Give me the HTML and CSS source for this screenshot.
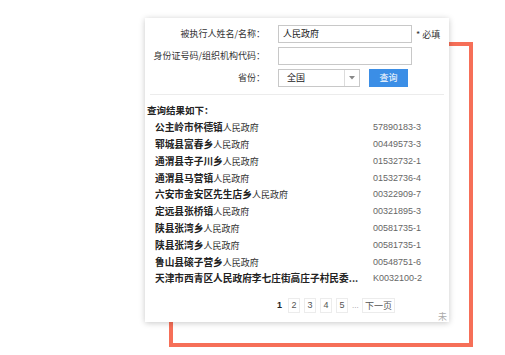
FILE: index.html
```html
<!DOCTYPE html>
<html lang="zh">
<head>
<meta charset="utf-8">
<title>查询</title>
<link rel="stylesheet" href="styles.css">
</head>
<body>
<div class="stage">
  <div class="frame"></div>
  <div class="card">
    <div class="form">
      <div class="label">被执行人姓名/名称：</div>
      <div class="field"><div class="input">人民政府</div><span class="req">* 必填</span></div>
      <div class="label">身份证号码/组织机构代码：</div>
      <div class="field"><div class="input"></div></div>
      <div class="label">省份：</div>
      <div class="field">
        <div class="select"><span class="sel-text">全国</span><span class="sel-arrow"><svg width="6" height="4" viewBox="0 0 6 4"><path d="M0 0H6L3 3.5Z" fill="#888"/></svg></span></div>
        <div class="btn">查询</div>
      </div>
    </div>
    <div class="sep"></div>
    <div class="results">
      <div class="heading">查询结果如下：</div>
      <div class="row"><span class="name"><b>公主岭市怀德镇</b>人民政府</span><span class="code">57890183-3</span></div>
      <div class="row"><span class="name"><b>郓城县富春乡</b>人民政府</span><span class="code">00449573-3</span></div>
      <div class="row"><span class="name"><b>通渭县寺子川乡</b>人民政府</span><span class="code">01532732-1</span></div>
      <div class="row"><span class="name"><b>通渭县马营镇</b>人民政府</span><span class="code">01532736-4</span></div>
      <div class="row"><span class="name"><b>六安市金安区先生店乡</b>人民政府</span><span class="code">00322909-7</span></div>
      <div class="row"><span class="name"><b>定远县张桥镇</b>人民政府</span><span class="code">00321895-3</span></div>
      <div class="row"><span class="name"><b>陕县张湾乡</b>人民政府</span><span class="code">00581735-1</span></div>
      <div class="row"><span class="name"><b>陕县张湾乡</b>人民政府</span><span class="code">00581735-1</span></div>
      <div class="row"><span class="name"><b>鲁山县磙子营乡</b>人民政府</span><span class="code">00548751-6</span></div>
      <div class="row"><span class="name"><b>天津市西青区人民政府李七庄街高庄子村民委...</b></span><span class="code">K0032100-2</span></div>
    </div>
    <div class="pager">
      <span class="cur">1</span>
      <span class="pg">2</span>
      <span class="pg">3</span>
      <span class="pg">4</span>
      <span class="pg">5</span>
      <span class="dots">...</span>
      <span class="pg next">下一页</span>
    </div>
    <div class="foot">未</div>
  </div>
</div>
</body>
</html>
```
FILE: styles.css
```css
html, body {
  margin: 0;
  padding: 0;
  background: #fff;
}
body {
  font-family: "Noto Sans CJK SC", "Liberation Sans", sans-serif;
  color: #333;
}
.stage {
  position: relative;
  width: 505px;
  height: 355px;
  padding: 18px 0 0 145px;
  box-sizing: border-box;
}
.frame {
  position: absolute;
  left: 169px;
  top: 42px;
  width: 304px;
  height: 305px;
  box-sizing: border-box;
  border: 4px solid #f66f58;
}
.card {
  position: relative;
  width: 304px;
  height: 304px;
  background: #fff;
  box-shadow: 0 1px 6px rgba(0, 0, 0, 0.22);
}
.form {
  display: grid;
  grid-template-columns: 120px 1fr;
  column-gap: 13px;
  row-gap: 4px;
  padding-top: 7px;
}
.label {
  height: 18px;
  line-height: 18px;
  font-size: 9px;
  text-align: right;
  color: #333;
  white-space: nowrap;
}
.field {
  display: flex;
  align-items: center;
  height: 18px;
}
.input {
  width: 134px;
  height: 18px;
  box-sizing: border-box;
  border: 1px solid #c8c8c8;
  font-size: 9px;
  line-height: 16px;
  padding-left: 4px;
  color: #222;
}
.req {
  font-size: 9px;
  margin-left: 4px;
  color: #333;
}
.select {
  display: flex;
  width: 82px;
  height: 18px;
  box-sizing: border-box;
  border: 1px solid #c8c8c8;
}
.sel-text {
  flex: 1;
  font-size: 9px;
  line-height: 16px;
  padding-left: 8px;
  color: #222;
}
.sel-arrow {
  width: 14px;
  border-left: 1px solid #dcdcdc;
  display: flex;
  align-items: center;
  justify-content: center;
}
.btn {
  margin-left: 9px;
  width: 39px;
  height: 18px;
  background: #3b8ee6;
  color: #fff;
  font-size: 9px;
  line-height: 18px;
  text-align: center;
}
.sep {
  height: 1px;
  margin: 7px 5px 0;
  background: #ececec;
}
.results {
  padding-top: 7px;
}
.heading {
  font-size: 9.5px;
  font-weight: bold;
  line-height: 16.8px;
  padding-left: 2px;
  color: #222;
}
.row {
  display: flex;
  height: 16.8px;
  align-items: center;
  padding-left: 10px;
  white-space: nowrap;
}
.name {
  width: 218px;
  font-size: 9px;
  color: #333;
}
.name b {
  font-size: 9.7px;
  color: #222;
}
.code {
  font-family: "Liberation Sans", sans-serif;
  font-size: 9px;
  color: #666;
}
.pager {
  display: flex;
  align-items: center;
  gap: 4px;
  padding-left: 132px;
  margin-top: 11px;
  height: 15px;
  font-family: "Liberation Sans", "Noto Sans CJK SC", sans-serif;
  font-size: 9px;
}
.cur {
  width: 7px;
  font-weight: bold;
  color: #222;
}
.pg {
  height: 15px;
  min-width: 12px;
  box-sizing: border-box;
  border: 1px solid #ececec;
  line-height: 13px;
  text-align: center;
  color: #555;
}
.next {
  width: 33px;
  font-family: "Noto Sans CJK SC", sans-serif;
  font-size: 9px;
}
.dots {
  width: 6px;
  color: #999;
  font-size: 8px;
}
.foot {
  display: flex;
  justify-content: flex-end;
  padding-right: 2px;
  margin-top: -1px;
  font-size: 9px;
  line-height: 10px;
  color: #aaa;
}
```
